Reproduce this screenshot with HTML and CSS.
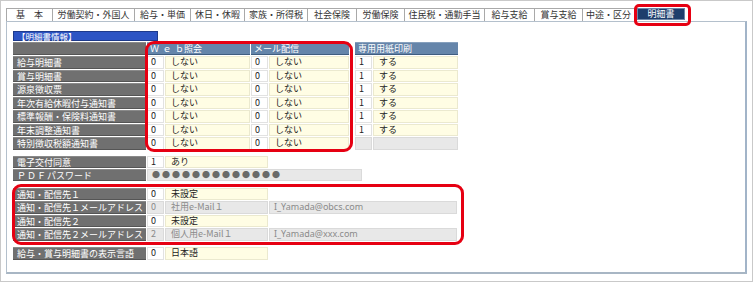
FILE: index.html
```html
<!DOCTYPE html>
<html lang="ja">
<head>
<meta charset="utf-8">
<link rel="stylesheet" href="styles.css">
</head>
<body>
<div class="screen">
  <div class="tabs">
    <div class="tab w47">基　本</div>
    <div class="tab w82">労働契約・外国人</div>
    <div class="tab w56">給与・単価</div>
    <div class="tab w54">休日・休暇</div>
    <div class="tab w63">家族・所得税</div>
    <div class="tab w49">社会保険</div>
    <div class="tab w48">労働保険</div>
    <div class="tab w80">住民税・通勤手当</div>
    <div class="tab w50">給与支給</div>
    <div class="tab w48">賞与支給</div>
    <div class="tab w52">中途・区分</div>
    <div class="tab active">明細書</div>
  </div>
  <div class="panel">
    <div class="sec-title">【明細書情報】</div>

    <div class="rows s1">
      <div class="row hrow">
        <div class="lbl"></div>
        <div class="hd wide1"><span class="spaced">Ｗｅ</span>ｂ照会</div>
        <div class="hd wide2">メール配信</div>
        <div class="sp"></div>
        <div class="hd wide1">専用用紙印刷</div>
      </div>
      <div class="row"><div class="lbl">給与明細書</div><div class="cd">0</div><div class="tx t85">しない</div><div class="cd">0</div><div class="tx t80">しない</div><div class="sp"></div><div class="cd">1</div><div class="tx t85">する</div></div>
      <div class="row"><div class="lbl">賞与明細書</div><div class="cd">0</div><div class="tx t85">しない</div><div class="cd">0</div><div class="tx t80">しない</div><div class="sp"></div><div class="cd">1</div><div class="tx t85">する</div></div>
      <div class="row"><div class="lbl">源泉徴収票</div><div class="cd">0</div><div class="tx t85">しない</div><div class="cd">0</div><div class="tx t80">しない</div><div class="sp"></div><div class="cd">1</div><div class="tx t85">する</div></div>
      <div class="row"><div class="lbl">年次有給休暇付与通知書</div><div class="cd">0</div><div class="tx t85">しない</div><div class="cd">0</div><div class="tx t80">しない</div><div class="sp"></div><div class="cd">1</div><div class="tx t85">する</div></div>
      <div class="row"><div class="lbl">標準報酬・保険料通知書</div><div class="cd">0</div><div class="tx t85">しない</div><div class="cd">0</div><div class="tx t80">しない</div><div class="sp"></div><div class="cd">1</div><div class="tx t85">する</div></div>
      <div class="row"><div class="lbl">年末調整通知書</div><div class="cd">0</div><div class="tx t85">しない</div><div class="cd">0</div><div class="tx t80">しない</div><div class="sp"></div><div class="cd">1</div><div class="tx t85">する</div></div>
      <div class="row"><div class="lbl">特別徴収税額通知書</div><div class="cd">0</div><div class="tx t85">しない</div><div class="cd">0</div><div class="tx t80">しない</div><div class="sp"></div><div class="cd gray"></div><div class="tx t85 gray"></div></div>
    </div>

    <div class="rows s2">
      <div class="row"><div class="lbl">電子交付同意</div><div class="cd">1</div><div class="tx t103">あり</div></div>
      <div class="row"><div class="lbl"><span class="spaced2">ＰＤＦ</span>パスワード</div><div class="pw">●●●●●●●●●●●●●</div></div>
    </div>

    <div class="rows s3">
      <div class="row"><div class="lbl">通知・配信先１</div><div class="cd">0</div><div class="tx t103">未設定</div></div>
      <div class="row"><div class="lbl">通知・配信先１メールアドレス</div><div class="cd gray dim">0</div><div class="tx t103 gray dim">社用e-Mail１</div><div class="mail">I_Yamada@obcs.com</div></div>
      <div class="row"><div class="lbl">通知・配信先２</div><div class="cd">0</div><div class="tx t103">未設定</div></div>
      <div class="row"><div class="lbl">通知・配信先２メールアドレス</div><div class="cd gray dim">2</div><div class="tx t103 gray dim">個人用e-Mail１</div><div class="mail">I_Yamada@xxx.com</div></div>
    </div>

    <div class="rows s4">
      <div class="row"><div class="lbl">給与・賞与明細書の表示言語</div><div class="cd">0</div><div class="tx t103">日本語</div></div>
    </div>
  </div>

  <div class="hl hl-tab"></div>
  <div class="hl hl-1"></div>
  <div class="hl hl-2"></div>
</div>
</body>
</html>
```

FILE: styles.css
```css
* { box-sizing: border-box; }
html, body { margin: 0; padding: 0; background: #fff; }
body {
  font-family: "Noto Sans CJK JP", "Noto Sans", sans-serif;
  font-size: 9px;
  color: #222;
}
.screen {
  position: relative;
  width: 753px;
  height: 282px;
  border: 1px solid #c9c9c9;
  padding: 7px 5px 0 5px;
  overflow: hidden;
}
.tabs {
  display: flex;
  height: 13px;
  align-items: flex-end;
}
.tab {
  height: 13px;
  line-height: 12px;
  text-align: center;
  background: #fff;
  border: 1px solid #a9a9a9;
  border-bottom: none;
  border-left: none;
  color: #333;
  white-space: nowrap;
}
.tab:first-child { border-left: 1px solid #a9a9a9; }
.w47 { width: 47px; } .w82 { width: 82px; } .w56 { width: 56px; }
.w54 { width: 54px; } .w63 { width: 63px; } .w49 { width: 49px; }
.w48 { width: 48px; } .w80 { width: 80px; } .w50 { width: 50px; }
.w52 { width: 52px; }
.tab.active {
  width: 48px;
  margin-left: 2px;
  margin-bottom: 1px;
  height: 12px;
  background: #1e3e6c;
  color: #fff;
  border: 1px solid #6c86a8;
  line-height: 10px;
}
.panel {
  width: 741px;
  height: 253px;
  border: 1px solid #b4c0cc;
  border-right: 2px solid #a2b4c8;
  border-bottom: 2px solid #a8b6c4;
  padding: 9px 0 0 6px;
}
.sec-title {
  width: 145px;
  height: 10px;
  line-height: 9px;
  background: #2c54c4;
  border: 1px solid #1d3a8c;
  color: #fff;
  padding-left: 3px;
  font-size: 8.5px;
  margin-bottom: 1px;
}
.rows { display: flex; flex-direction: column; gap: 1px; }
.row { display: flex; gap: 1px; height: 12.5px; }
.s1 .hrow { height: 13px; }
.s2 { margin-top: 6px; }
.s2 .row { height: 12px; }
.s3 { margin-top: 7px; }
.s4 { margin-top: 6px; }
.s4 .row { height: 13px; }

.lbl {
  width: 133px;
  background: #707070;
  border-top: 1px solid #8a8a8a;
  border-bottom: 1px solid #555;
  color: #fff;
  padding-left: 4px;
  line-height: 11px;
  white-space: nowrap;
  overflow: hidden;
}
.spaced2 { letter-spacing: 1px; }
.hd {
  background: #6585aa;
  border-top: 1px solid #86a0bd;
  border-bottom: 1px solid #3f5d80;
  color: #fff;
  padding-left: 3px;
  line-height: 11px;
  white-space: nowrap;
}
.spaced { letter-spacing: 3.5px; }
.wide1 { width: 103px; }
.wide2 { width: 98px; }
.sp { width: 4px; }
.cd {
  width: 17px;
  background: #fff;
  border: 1px solid #e2e2e2;
  padding-left: 3px;
  line-height: 10px;
}
.tx {
  background: #fffde4;
  border: 1px solid #ebe9cf;
  padding-left: 5px;
  line-height: 10px;
  white-space: nowrap;
}
.t85 { width: 85px; }
.t80 { width: 80px; }
.t103 { width: 103px; }
.gray { background: #e8e8e8; border-color: #dadada; }
.dim { color: #8a8a8a; }
.pw {
  width: 215px;
  background: #e8e8e8;
  border: 1px solid #dadada;
  color: #6a6a6a;
  padding-left: 4px;
  line-height: 10px;
  font-size: 8px;
  letter-spacing: 2px;
  white-space: nowrap;
  overflow: hidden;
}
.mail {
  width: 188px;
  background: #e8e8e8;
  border: 1px solid #dadada;
  color: #8a8a8a;
  padding-left: 4px;
  line-height: 10px;
  font-family: "Noto Sans", "DejaVu Sans", sans-serif;
}

.hl {
  position: absolute;
  border: 3px solid #e60012;
}
.hl-tab { left: 633px; top: 3px; width: 57px; height: 22px; border-radius: 5px; }
.hl-1 { left: 144px; top: 40px; width: 208px; height: 111px; border-radius: 9px; }
.hl-2 { left: 11px; top: 183px; width: 452px; height: 61px; border-radius: 9px; }
```
